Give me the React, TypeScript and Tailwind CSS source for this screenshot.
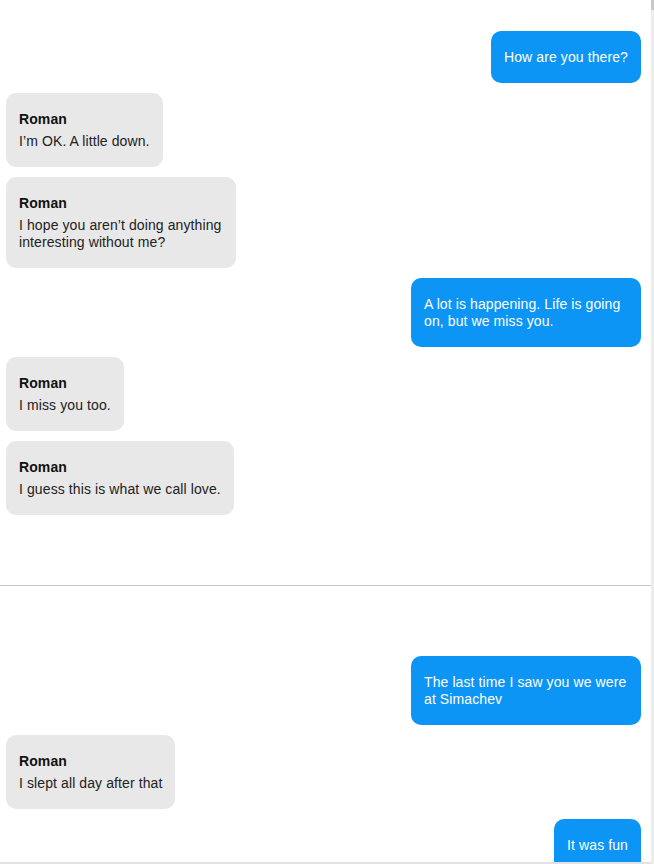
import React from 'react'

type Msg = { from: 'me' | 'roman'; text: string }

const top: Msg[] = [
  { from: 'me', text: 'How are you there?' },
  { from: 'roman', text: 'I’m OK. A little down.' },
  { from: 'roman', text: 'I hope you aren’t doing anything interesting without me?' },
  { from: 'me', text: 'A lot is happening. Life is going on, but we miss you.' },
  { from: 'roman', text: 'I miss you too.' },
  { from: 'roman', text: 'I guess this is what we call love.' },
]

const bottom: Msg[] = [
  { from: 'me', text: 'The last time I saw you we were at Simachev' },
  { from: 'roman', text: 'I slept all day after that' },
  { from: 'me', text: 'It was fun' },
]

function Bubble({ msg }: { msg: Msg }) {
  if (msg.from === 'me') {
    return (
      <div className="flex justify-end">
        <div className="max-w-[230px] rounded-[10px] bg-[#0c95f5] px-[13px] pt-[18px] pb-[17px] text-[14px] leading-[17px] tracking-[0.1px] text-white">
          {msg.text}
        </div>
      </div>
    )
  }
  return (
    <div className="flex justify-start">
      <div className="max-w-[230px] rounded-[10px] bg-[#e8e8e8] px-[13px] pt-[18px] pb-[17px] text-[14px] leading-[17px] tracking-[0.1px]">
        <div className="font-bold text-[#111]">Roman</div>
        <div className="mt-[5px] text-[#222]">{msg.text}</div>
      </div>
    </div>
  )
}

export default function App() {
  return (
    <div className="flex h-[864px] overflow-hidden bg-white font-['Liberation_Sans',Arial,sans-serif]">
      <div className="flex min-w-0 flex-1 flex-col">
        {/* first conversation */}
        <div className="flex h-[586px] shrink-0 flex-col gap-[10px] border-b border-[#c8c8c8] pt-[31px] pl-[6px] pr-[10px]">
          {top.map((m, i) => (
            <Bubble key={i} msg={m} />
          ))}
        </div>

        {/* second conversation */}
        <div className="flex min-h-0 flex-1 flex-col gap-[10px] overflow-hidden pt-[70px] pl-[6px] pr-[10px]">
          {bottom.map((m, i) => (
            <Bubble key={i} msg={m} />
          ))}
        </div>
        <div className="h-[2px] shrink-0 bg-[#e2e2e2]" />
      </div>

      {/* scrollbar strip */}
      <div className="flex w-[3px] shrink-0 flex-col bg-[#ededed]">
        <div className="h-[10px] bg-[#c9c9c9]" />
      </div>
    </div>
  )
}
